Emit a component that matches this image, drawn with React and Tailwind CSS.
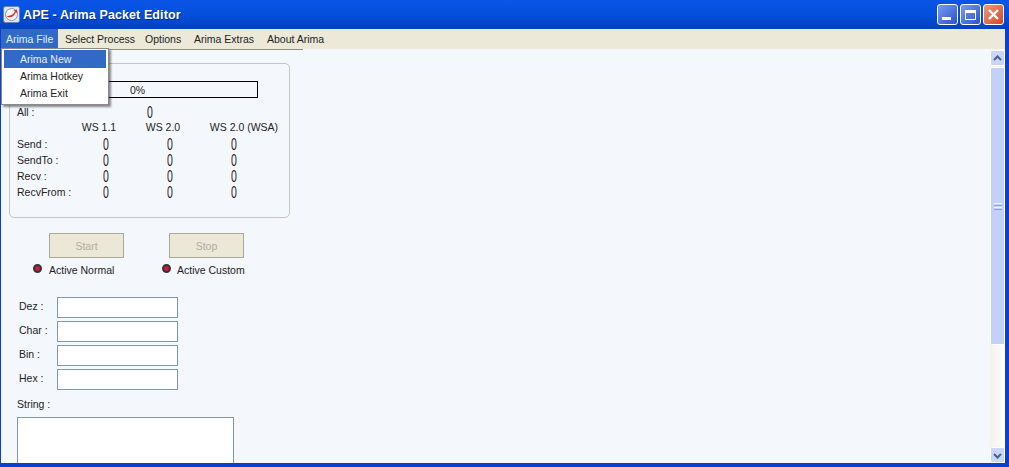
import React from "react";

const font = "[font-family:'Liberation_Sans',Arial,sans-serif]";

function Logo() {
  return (
    <svg width="17" height="17" viewBox="0 0 17 17" className="shrink-0">
      <rect x="0.5" y="0.5" width="16" height="16" rx="2" fill="#dfe6f2" stroke="#6d83b5" />
      <circle cx="8.5" cy="8.5" r="6" fill="#f4f6fb" stroke="#8b95ad" />
      <path d="M3.5 10 C6 12.5 11 11.5 13 6 L14.5 7.5 L14 3.5 L10.5 4.5 L12 5.5 C10 9 7 10 3.5 10Z" fill="#d8321f" />
    </svg>
  );
}

function WinBtn({ children, red }) {
  return (
    <div
      className={`w-[21px] h-[21px] rounded-[3px] border border-white flex items-center justify-center ${
        red ? "bg-gradient-to-br from-[#ea9a7c] to-[#d4431c]" : "bg-gradient-to-br from-[#7a9cf0] to-[#2a52c8]"
      }`}
    >
      {children}
    </div>
  );
}

function LedDot() {
  return (
    <span className="w-[9px] h-[9px] rounded-full bg-[#d01a34] border-2 border-[#33333c] shrink-0 -mt-[3px]" />
  );
}

function Zero() {
  return <span className="block w-[6px] text-center text-[#222] scale-y-[1.55] leading-[9px]">0</span>;
}

function Counter({ label }) {
  return (
    <div className="grid grid-cols-[57px_64px_64px_64px] justify-items-start h-4 items-center">
      <span className="text-[#222] whitespace-nowrap">{label}</span>
      <span className="pl-[29px]"><Zero /></span>
      <span className="pl-[29px]"><Zero /></span>
      <span className="pl-[29px]"><Zero /></span>
    </div>
  );
}

function Field({ label }) {
  return (
    <div className="flex items-center h-[21px] mb-[3px]">
      <span className="w-[38px] text-[#222] pb-[3px]">{label}</span>
      <div className="w-[121px] h-[21px] bg-white border border-[#8497a8]" />
    </div>
  );
}

function Scrollbar() {
  return (
    <div className="w-[15px] pt-px flex flex-col bg-gradient-to-r from-[#f3f1ec] to-[#fdfdfa] shrink-0">
      <div className="h-[16px] bg-[#c9d6f7] border border-white rounded-[2px] flex items-center justify-center">
        <svg width="9" height="7" viewBox="0 0 9 7"><path d="M1 5 L4.5 1.5 L8 5" fill="none" stroke="#4d6185" strokeWidth="2" /></svg>
      </div>
      <div className="h-[278px] bg-[#c3d0f8] border border-white rounded-[2px] flex flex-col items-center justify-center gap-[1px] mt-px">
        <div className="w-[8px] h-px bg-[#eef2fe]" />
        <div className="w-[8px] h-px bg-[#8fa3d8]" />
        <div className="w-[8px] h-px bg-[#eef2fe]" />
        <div className="w-[8px] h-px bg-[#8fa3d8]" />
      </div>
      <div className="flex-1" />
      <div className="h-[16px] bg-[#c9d6f7] border border-white rounded-[2px] flex items-center justify-center">
        <svg width="9" height="7" viewBox="0 0 9 7"><path d="M1 2 L4.5 5.5 L8 2" fill="none" stroke="#4d6185" strokeWidth="2" /></svg>
      </div>
    </div>
  );
}

export default function App() {
  return (
    <div className={`${font} w-[1009px] h-[467px] relative overflow-hidden bg-[#0a3fd0] flex flex-col text-[10.5px] leading-[14px]`}>
      {/* Title bar */}
      <div className="h-[29px] shrink-0 flex items-center pl-[3px] pr-[5px] bg-gradient-to-b from-[#0a55e6] via-[#0450dc] to-[#0240c0]">
        <Logo />
        <span className="ml-[3px] text-white font-bold text-[12.5px] tracking-[0.1px] [text-shadow:1px_1px_#0a2a80]">APE - Arima Packet Editor</span>
        <div className="ml-auto flex gap-[2px]">
          <WinBtn><span className="w-[9px] h-[3px] bg-white mt-[8px] -ml-[3px]" /></WinBtn>
          <WinBtn><span className="w-[11px] h-[10px] border border-white border-t-[3px]" /></WinBtn>
          <WinBtn red>
            <svg width="13" height="13" viewBox="0 0 13 13"><path d="M2 2 L11 11 M11 2 L2 11" stroke="#fff" strokeWidth="2.4" /></svg>
          </WinBtn>
        </div>
      </div>

      {/* Body with window border */}
      <div className="flex-1 min-h-0 flex flex-col pl-[1px] pr-[4px] pb-[4px] bg-[#0a3fd0]">
        {/* Menu bar */}
        <div className="h-[20px] shrink-0 bg-[#ece9d8] flex items-stretch text-[#222]">
          <div className="w-[57px] bg-[#316ac5] text-[#e6edf8] flex items-center pl-[5px]">Arima File</div>
          <div className="w-[81px] flex items-center pl-[7px]">Select Process</div>
          <div className="w-[49px] flex items-center pl-[6px]">Options</div>
          <div className="w-[73px] flex items-center pl-[6px]">Arima Extras</div>
          <div className="flex items-center pl-[6px]">About Arima</div>
        </div>

        {/* Client */}
        <div className="flex-1 min-h-0 flex bg-[#f4f7fc]">
          <div className="flex-1 min-w-0 relative overflow-hidden pl-[8px] pt-[14px]">
            <div className="w-[281px] h-[155px] border border-[#c4c6c0] rounded-[5px] pl-[7px]">
              <div className="mt-[17px] w-[241px] h-[17px] border border-black flex items-center justify-center text-[#222] mb-[7px]">0%</div>
              <div className="grid grid-cols-[130px_64px] justify-items-start h-[14px] items-center text-[#222]">
                <span>All :</span>
                <Zero />
              </div>
              <div className="grid grid-cols-[50px_64px_64px_98px] h-[16px] items-center text-center text-[#222]">
                <span />
                <span>WS 1.1</span>
                <span>WS 2.0</span>
                <span className="whitespace-nowrap">WS 2.0 (WSA)</span>
              </div>
              <div className="mt-px">
                <Counter label="Send :" />
                <Counter label="SendTo :" />
                <Counter label="Recv :" />
                <Counter label="RecvFrom :" />
              </div>
            </div>

            <div className="flex gap-[45px] ml-[40px] mt-[15px]">
              <div className="flex flex-col w-[75px]">
                <button className="w-[75px] h-[25px] bg-[#ebe8d8] border border-[#a9a998] text-[#b0ad9f]">Start</button>
                <div className="flex items-center gap-[7px] mt-[5px] -ml-[16px] h-[14px] text-[#222] whitespace-nowrap">
                  <LedDot />
                  <span>Active Normal</span>
                </div>
              </div>
              <div className="flex flex-col w-[75px]">
                <button className="w-[75px] h-[25px] bg-[#ebe8d8] border border-[#a9a998] text-[#b0ad9f]">Stop</button>
                <div className="flex items-center gap-[6px] mt-[5px] -ml-[7px] h-[14px] text-[#222] whitespace-nowrap">
                  <LedDot />
                  <span>Active Custom</span>
                </div>
              </div>
            </div>

            <div className="ml-[10px] mt-[20px]">
              <Field label="Dez :" />
              <Field label="Char :" />
              <Field label="Bin :" />
              <Field label="Hex :" />
            </div>
            <div className="ml-[8px] mt-[7px] text-[#222]">String :</div>
            <div className="ml-[8px] mt-[6px] w-[217px] h-[60px] bg-white border border-[#8497a8]" />
            <div className="absolute left-0 top-0 w-[302px] h-px bg-[#8f8f88]" />
          </div>
          <Scrollbar />
        </div>
      </div>

      {/* Dropdown menu */}
      <div className="absolute left-[1px] top-[48px] w-[108px] h-[57px] bg-white border border-[#8a8a8a] pl-[2px] pr-[2px] pt-[1px] shadow-[2px_2px_2px_rgba(0,0,0,0.45)] text-[#222]">
        <div className="h-[18px] bg-[#316ac5] text-[#e6edf8] pl-[16px] flex items-center">Arima New</div>
        <div className="h-[16px] pl-[16px] flex items-center">Arima Hotkey</div>
        <div className="h-[17px] pl-[16px] flex items-center">Arima Exit</div>
      </div>
    </div>
  );
}
